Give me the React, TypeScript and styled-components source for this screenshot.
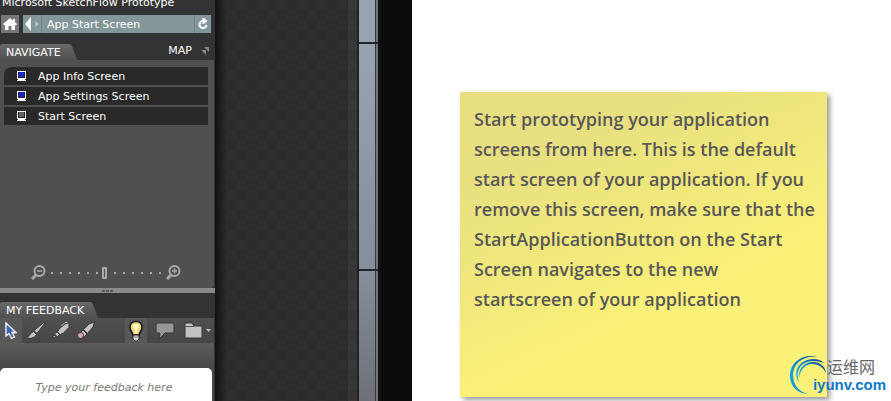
import React from "react";
import styled, { createGlobalStyle } from "styled-components";

const Global = createGlobalStyle`
  *, *::before, *::after { box-sizing: border-box; }
  body { margin: 0; background: #fff; overflow: hidden; }
  button { border: 0; padding: 0; background: none; color: inherit; font: inherit; display: flex; align-items: center; justify-content: center; cursor: pointer; }
  svg { display: block; flex: none; }
`;

const Page = styled.div`
  display: grid;
  grid-template-columns: 215px 197px minmax(0, 1fr);
  height: 100vh;
  overflow: hidden;
`;

const Sidebar = styled.aside`
  display: flex;
  flex-direction: column;
  min-height: 0;
  overflow: hidden;
  background: #333;
  color: #fff;
  font: 11px/14px "DejaVu Sans", Verdana, sans-serif;
`;

const Title = styled.header`
  display: flex;
  align-items: flex-end;
  height: 10px;
  padding-left: 2px;
  white-space: nowrap;
  flex: none;
`;

const AddressRow = styled.div`
  display: flex;
  gap: 4px;
  flex: none;
  height: 18px;
  margin: 5px 4px 0 1px;
`;

const HomeButton = styled.button`
  width: 18px;
  background: #777;
`;

const Address = styled.nav`
  flex: 1;
  display: flex;
  background: #839699;
`;

const BackButton = styled.button`
  width: 19px;
  border-right: 1px solid #71868b !important;
`;

const Location = styled.span`
  flex: 1;
  padding-left: 5px;
  line-height: 19px;
`;

const RefreshButton = styled.button`
  width: 17px;
  border-left: 1px solid #6d8186 !important;
`;

const TabRow = styled.div<{ $gap: number }>`
  display: flex;
  justify-content: space-between;
  flex: none;
  height: 16px;
  margin: ${(p) => p.$gap}px 6px 0 0;
`;

const Tab = styled.h2<{ $width: number }>`
  width: ${(p) => p.$width}px;
  margin: 0;
  padding-left: 6px;
  font: inherit;
  line-height: 17px;
  background: linear-gradient(#686868, #505050);
  clip-path: polygon(0 1px, 2px 0, calc(100% - 7px) 0, calc(100% - 5px) 2px, 100% 100%, 0 100%);
  white-space: nowrap;
`;

const MapButton = styled.button`
  gap: 9px;
  height: 13px;
`;

const NavigatePanel = styled.section`
  display: flex;
  flex-direction: column;
  justify-content: space-between;
  flex: none;
  height: 228px;
  margin-right: 1px;
  padding: 7px 5px 8px 4px;
  border-radius: 0 0 3px 0;
  background: #505050;
`;

const ScreenList = styled.ul`
  display: flex;
  flex-direction: column;
  gap: 2px;
  margin: 0;
  padding: 0 1px 0 0;
  list-style: none;
`;

const ScreenItem = styled.li`
  background: #292929;
  &:first-child { border-top-left-radius: 8px; }
`;

const ScreenLink = styled.a`
  display: flex;
  align-items: center;
  gap: 11px;
  height: 18px;
  padding: 1px 0 0 12px;
  color: #fff;
  text-decoration: none;
`;

const ZoomRow = styled.div`
  display: flex;
  align-items: center;
  justify-content: center;
  gap: 4px;
  padding-right: 1px;
`;

const ZoomSlider = styled.input`
  appearance: none;
  width: 112px;
  height: 12px;
  margin: 0;
  background: linear-gradient(90deg, transparent 1px, #aaa 1px, #aaa 3px, transparent 3px) 0 5px / 9px 2px repeat-x;
  &::-webkit-slider-thumb {
    appearance: none;
    width: 5px;
    height: 12px;
    border: 2px solid #aaa;
    border-radius: 1px;
    background: #505050;
    box-shadow: 0 0 0 2px #505050;
  }
`;

const Splitter = styled.div`
  display: flex;
  align-items: center;
  justify-content: center;
  gap: 1px;
  flex: none;
  height: 5px;
  background: #8a8a8a;
`;

const Grip = styled.i`
  width: 3px;
  height: 2px;
  background: #5b5b5b;
`;

const Toolbar = styled.div`
  display: flex;
  flex: none;
  height: 25px;
  margin-right: 1px;
  padding-right: 3px;
  background: linear-gradient(#505050, #464646);
`;

const ToolGroup = styled.div<{ $push?: boolean }>`
  display: flex;
  gap: ${(p) => (p.$push ? 7 : 3)}px;
  margin-left: ${(p) => (p.$push ? "auto" : "0")};
`;

const Tool = styled.button<{ $on?: boolean; $wide?: boolean }>`
  width: ${(p) => (p.$wide ? 28 : 22)}px;
  gap: 3px;
  background: ${(p) => (p.$on ? "#585858" : "none")};
`;

const FeedbackPanel = styled.section`
  flex: 1;
  display: flex;
  min-height: 58px;
  margin-right: 1px;
  padding: 25px 2px 0 0;
  background: linear-gradient(#5b5c5e, #484848 25px);
`;

const FeedbackBox = styled.textarea`
  flex: 1;
  min-width: 0;
  border: 0;
  border-radius: 5px 5px 0 0;
  padding: 13px 4px 0 0;
  resize: none;
  overflow: hidden;
  outline: 0;
  background: #fff;
  text-align: center;
  font: italic 11px/14px "DejaVu Sans", Verdana, sans-serif;
  &::placeholder { color: #777; opacity: 1; }
`;

const Stage = styled.div`
  display: grid;
  grid-template-columns: 1fr 9px 24px 31px;
  background: #0b0b0b;
`;

const Checker = styled.div`
  background:
    linear-gradient(90deg, #111 0, #11111100 12px),
    repeating-conic-gradient(#2b2b2b 0 25%, #2e2e2e 0 50%) 2px 0 / 20px 20px;
`;

const Margin = styled.div`
  background: repeating-linear-gradient(#383838 0 10px, #353535 10px 20px);
`;

const Frame = styled.div`
  display: grid;
  grid-template-rows: 42px 225px 1fr;
  gap: 2px;
  border-left: 2px solid #202226;
  border-right: 3px solid #111;
  background: #20232a;
`;

const FramePiece = styled.div<{ $from: string; $to: string }>`
  border-right: 2px solid #777573;
  background: linear-gradient(${(p) => p.$from}, ${(p) => p.$to});
  box-shadow: inset -1px 0 #34373d;
`;

const Canvas = styled.main`
  position: relative;
  padding: 92px 64px 0 48px;
  background: #fff;
`;

const Note = styled.article`
  min-height: 305px;
  padding: 12px 0 20px 14px;
  background: linear-gradient(155deg, #e8e080 20%, #fbf178 68%);
  box-shadow: 3px 3px 5px #0006;
  color: #585858;
  font: 600 18px/30px "Buxton Sketch", "Open Sans", sans-serif;
  white-space: nowrap;
`;

const NoteLine = styled.span`
  display: block;
`;

const Watermark = styled.div`
  position: absolute;
  right: 5px;
  bottom: 5px;
  display: flex;
`;

const Brand = styled.div`
  display: flex;
  flex-direction: column;
  align-items: flex-end;
  margin-left: -14px;
  padding-top: 2px;
`;

const BrandName = styled.span`
  padding-right: 11px;
  color: #666;
  font: 16px/20px "Noto Sans CJK SC", sans-serif;
`;

const BrandDomain = styled.span`
  color: #0d78cb;
  font: bold 15px/18px "Liberation Sans", Arial, sans-serif;
`;

const Monitor = ({ fill }: { fill: string }) => (
  <svg width="11" height="11" viewBox="0 0 11 11">
    <path d="M1 0h9v8h-1v1h1v1H1V9h1V8H1z" fill="#fff" />
    <path d="M2 1h7v6H2z" fill="#222" />
    <path d="M3 1h5v5H3z" fill={fill} />
  </svg>
);

const Magnifier = ({ plus }: { plus?: boolean }) => (
  <svg width="15" height="15" viewBox="0 0 15 15" fill="none" stroke="#aaa" strokeWidth="2">
    <circle cx="8.5" cy="6" r="5" />
    <path d="M5 10 1 14" strokeWidth="3" />
    <path d={plus ? "M6 6h5M8.500 3.500v5" : "M6 6h5"} strokeWidth="1.500" />
  </svg>
);

const screens = [
  { name: "App Info Screen", color: "#1825d8" },
  { name: "App Settings Screen", color: "#1825d8" },
  { name: "Start Screen", color: "#626262" },
];

const noteLines = [
  "Start prototyping your application",
  "screens from here. This is the default",
  "start screen of your application. If you",
  "remove this screen, make sure that the",
  "StartApplicationButton on the Start",
  "Screen navigates to the new",
  "startscreen of your application",
];

export default function App() {
  return (
    <>
      <Global />
      <Page>
        <Sidebar>
          <Title>Microsoft SketchFlow Prototype</Title>
          <AddressRow>
            <HomeButton aria-label="Home">
              <svg width="16" height="14" viewBox="0 0 16 14" fill="#fff">
                <path d="M8 1 1 7l1 1.500 1-.7V13h3.500V9h3v4H13V7.800l1 .7L15 7l-2-1.700V2h-2v1.500z" />
              </svg>
            </HomeButton>
            <Address>
              <BackButton aria-label="Back">
                <svg width="16" height="14" viewBox="0 0 16 14">
                  <path d="M7 0v14L1 7z" fill="#fff" />
                  <path d="M11 4v6l4-3z" fill="#b5c2c4" />
                </svg>
              </BackButton>
              <Location>App Start Screen</Location>
              <RefreshButton aria-label="Refresh">
                <svg width="12" height="12" viewBox="0 0 12 12">
                  <path d="M6.500 3A3.500 3.500 0 1 0 9.500 7" fill="none" stroke="#fff" strokeWidth="2" />
                  <path d="M5 0h2l3.500 3L7 6H5l1.500-2H4V2h2z" fill="#fff" />
                </svg>
              </RefreshButton>
            </Address>
          </AddressRow>
          <TabRow $gap={11}>
            <Tab $width={77}>NAVIGATE</Tab>
            <MapButton>
              MAP
              <svg width="8" height="8" viewBox="0 0 8 8" fill="#858585">
                <path d="M3 0h5v5zM0 3h5v5z" />
              </svg>
            </MapButton>
          </TabRow>
          <NavigatePanel>
            <ScreenList>
              {screens.map((s) => (
                <ScreenItem key={s.name}>
                  <ScreenLink href="#">
                    <Monitor fill={s.color} />
                    {s.name}
                  </ScreenLink>
                </ScreenItem>
              ))}
            </ScreenList>
            <ZoomRow>
              <button aria-label="Zoom out"><Magnifier /></button>
              <ZoomSlider type="range" aria-label="Map zoom" defaultValue={49} />
              <button aria-label="Zoom in"><Magnifier plus /></button>
            </ZoomRow>
          </NavigatePanel>
          <Splitter><Grip /><Grip /><Grip /></Splitter>
          <TabRow $gap={9}>
            <Tab $width={98}>MY FEEDBACK</Tab>
          </TabRow>
          <Toolbar>
            <ToolGroup>
              <Tool $on aria-label="Select">
                <svg width="14" height="20" viewBox="0 0 14 20">
                  <path d="M2 2v13l3-2.500 2.500 5 3-1.500-2.500-4.500h4z" fill="#3563b5" stroke="#fff" strokeWidth="1.300" />
                </svg>
              </Tool>
              <Tool aria-label="Brush">
                <svg width="20" height="20" viewBox="0 0 20 20" fill="#c2c2c2" stroke="#363636" strokeWidth="1">
                  <path d="M18.500 1 8 9.500l3 3L19 2zM7.500 10.500l-3 2C3.500 15 2 16 0 16.500c4 1.500 8 1 10.500-3z" />
                </svg>
              </Tool>
              <Tool aria-label="Pen">
                <svg width="20" height="20" viewBox="0 0 20 20" fill="#c2c2c2" stroke="#363636" strokeWidth="1">
                  <path d="M14 3 8 8l-1.500 3 2.500 2.500 3-1 6-6V3.500L16.500 2zM6 11l-2.500 2 3 3 2-2.500zM3 14l-2 3 4.500-.8z" />
                  <path d="M10.500 5 14 1.500h2.500" fill="none" stroke="#c2c2c2" />
                </svg>
              </Tool>
              <Tool aria-label="Eraser">
                <svg width="20" height="20" viewBox="0 0 20 20" fill="#c2c2c2" stroke="#363636" strokeWidth="1">
                  <path d="M18.500 1 13 3 7.500 8.500l4 4L17 6zM7 9l-2.500 2.500 4 4L11 13z" />
                  <circle cx="4.500" cy="14.500" r="3" fill="#dba9a6" />
                </svg>
              </Tool>
            </ToolGroup>
            <ToolGroup $push>
              <Tool $on aria-label="Ideas">
                <svg width="18" height="22" viewBox="0 0 18 22">
                  <path d="M9 1.500C5 1.500 3 4 3 7.500c0 3 2.500 4.500 3 7.500h6c.5-3 3-4.500 3-7.500 0-3.500-2-6-6-6z" fill="#f5d97a" stroke="#181818" strokeWidth="1.500" />
                  <path d="M6 6c1-3 5-3 6 0l-2 3v4H8V9z" fill="#fffbd2" />
                  <path d="M6 15h6v4l-2 2H8l-2-2z" fill="#ddd" stroke="#181818" />
                  <path d="M7 17h4" stroke="#777" />
                </svg>
              </Tool>
              <Tool aria-label="Comment">
                <svg width="20" height="20" viewBox="0 0 20 20">
                  <path d="M3 2h14q2 0 2 2v6q0 2-2 2H10l-6 6 1-6H3q-2 0-2-2V4q0-2 2-2z" fill="#979797" stroke="#363636" />
                </svg>
              </Tool>
              <Tool $wide aria-label="Folder">
                <svg width="19" height="18" viewBox="0 0 19 18">
                  <path d="M1 1h7l2 3h8v12H1z" fill="#c2c2c2" stroke="#363636" />
                  <path d="M1 4.500h9" stroke="#555" />
                </svg>
                <svg width="5" height="3" viewBox="0 0 5 3"><path d="M0 0h5L2.500 3z" fill="#c2c2c2" /></svg>
              </Tool>
            </ToolGroup>
          </Toolbar>
          <FeedbackPanel>
            <FeedbackBox aria-label="Feedback" placeholder="Type your feedback here" />
          </FeedbackPanel>
        </Sidebar>
        <Stage>
          <Checker />
          <Margin />
          <Frame>
            <FramePiece $from="#98a3b2" $to="#98a3b2" />
            <FramePiece $from="#98a3b2" $to="#858e9a" />
            <FramePiece $from="#858e9a" $to="#6d7078" />
          </Frame>
        </Stage>
        <Canvas>
          <Note>
            {noteLines.map((line) => <NoteLine key={line}>{line} </NoteLine>)}
          </Note>
          <Watermark>
            <svg width="38" height="42" viewBox="0 0 38 42">
              <defs>
                <linearGradient id="swirl" x1="0" y1="0.600" x2="1" y2="0.300">
                  <stop offset="0" stopColor="#08a6ec" />
                  <stop offset="1" stopColor="#0b4c8f" />
                </linearGradient>
              </defs>
              <g fill="url(#swirl)">
                <path d="M19 40C8 40 0 31 1 20 2 7 15-1 29 3 15 1 4 9 4 21c0 10 6 17 15 19z" />
                <path d="M10 29C4 18 9 9 18 6c7-2 13-1 17 3-6-2-11-3-17-1C9 11 7 20 10 29z" />
                <path d="M10 24C9 14 16 8 24 8c7 0 12 4 13 11-3-6-8-9-14-9-7 0-12 6-13 14z" />
              </g>
            </svg>
            <Brand>
              <BrandName>运维网</BrandName>
              <BrandDomain>iyunv.com</BrandDomain>
            </Brand>
          </Watermark>
        </Canvas>
      </Page>
    </>
  );
}
